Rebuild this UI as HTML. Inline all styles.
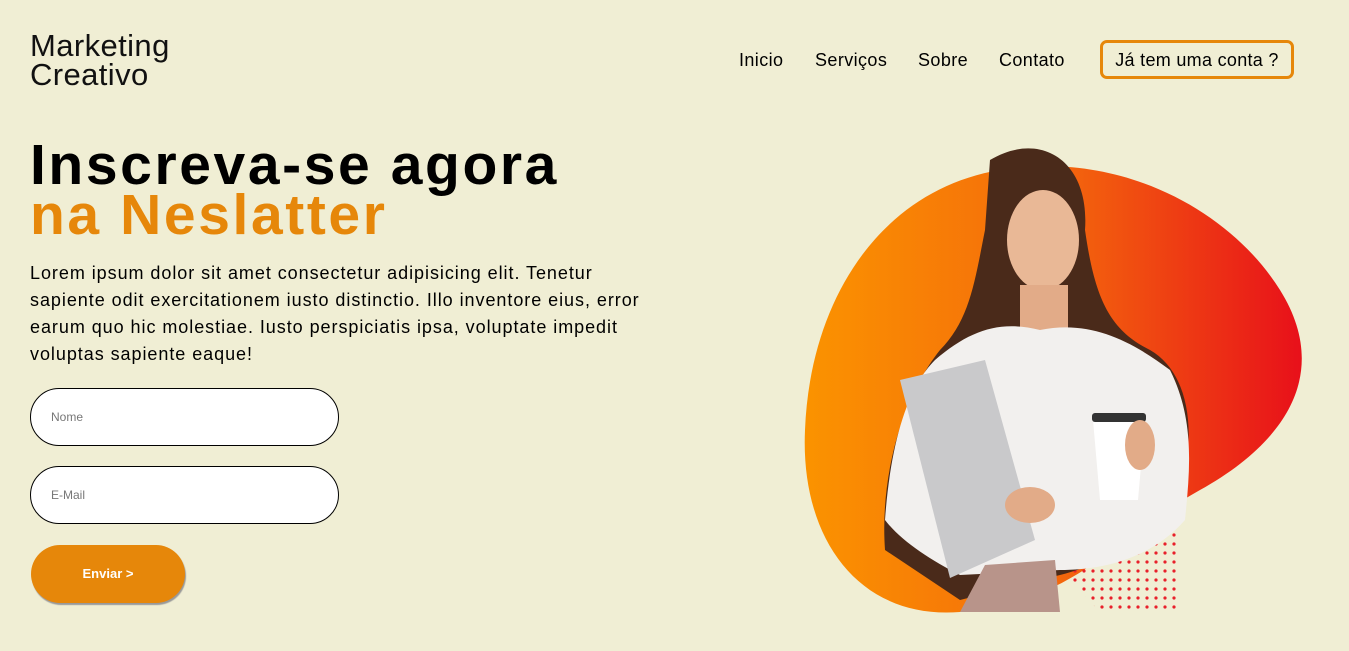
<!DOCTYPE html>
<html><head><meta charset="utf-8"><style>
*{margin:0;padding:0;box-sizing:border-box}
body{width:1349px;height:651px;background:#f0eed4;font-family:"Liberation Sans",sans-serif;position:relative;overflow:hidden;color:#000}
.logo{position:absolute;left:30px;top:31px;font-size:31px;line-height:29px;letter-spacing:0.4px;color:#111}
nav{position:absolute;top:50px;left:739px;font-size:18px;letter-spacing:0.4px}
nav span{position:absolute;white-space:nowrap}
.btn{position:absolute;left:1100px;top:40px;width:194px;height:39px;border:3px solid #e6870a;border-radius:7px;font-size:18px;text-align:center;line-height:34px;letter-spacing:0.3px}
h1{position:absolute;left:30px;top:140px;font-size:57px;line-height:50px;font-weight:bold;letter-spacing:2.6px;white-space:nowrap}
h1 .o{color:#e6870a}
p.t{position:absolute;left:30px;top:260px;font-size:18px;line-height:27px;white-space:nowrap;letter-spacing:0.95px}
.in{position:absolute;left:30px;width:309px;height:58px;border:1.5px solid #000;border-radius:29px;background:#fff;font-size:12px;color:#777;padding-left:20px;line-height:56px}
.send{position:absolute;left:31px;top:545px;width:154px;height:58px;border-radius:29px;background:#e6870a;color:#fff;font-weight:bold;font-size:13px;text-align:center;line-height:58px;box-shadow:1px 2px 1px #999}
</style></head><body>
<div class="logo">Marketing<br>Creativo</div>
<nav><span style="left:0">Inicio</span><span style="left:76px">Serviços</span><span style="left:179px">Sobre</span><span style="left:260px">Contato</span></nav>
<div class="btn">Já tem uma conta ?</div>
<h1>Inscreva-se agora<br><span class="o">na Neslatter</span></h1>
<p class="t">Lorem ipsum dolor sit amet consectetur adipisicing elit. Tenetur<br>sapiente odit exercitationem iusto distinctio. Illo inventore eius, error<br>earum quo hic molestiae. Iusto perspiciatis ipsa, voluptate impedit<br>voluptas sapiente eaque!</p>
<div class="in" style="top:388px">Nome</div>
<div class="in" style="top:466px">E-Mail</div>
<div class="send">Enviar &gt;</div>
<svg style="position:absolute;left:0;top:0" width="1349" height="651">
<defs>
<linearGradient id="g" x1="0" x2="1"><stop offset="0" stop-color="#fb9300"/><stop offset="0.5" stop-color="#f46a0c"/><stop offset="1" stop-color="#e8101a"/></linearGradient>
<pattern id="d" width="9" height="9" patternUnits="userSpaceOnUse"><circle cx="4" cy="4" r="1.6" fill="#e8202a"/></pattern>
</defs>
<path d="M1000 170 C1120 150 1230 210 1280 290 C1330 370 1290 440 1200 490 C1110 540 1080 600 960 612 C860 620 800 540 805 430 C810 300 880 190 1000 170Z" fill="url(#g)"/>
<path d="M1060 570 L1180 520 L1180 612 L1100 612Z" fill="url(#d)"/>
<path d="M990 160 C1040 130 1090 160 1085 230 C1095 300 1110 330 1150 350 C1185 370 1195 420 1185 470 C1175 520 1120 560 1060 575 L960 600 L885 550 C880 480 900 400 940 350 C970 320 975 280 985 230Z" fill="#4a2a1a"/>
<ellipse cx="1043" cy="240" rx="36" ry="50" fill="#e9b896"/>
<path d="M1020 285 L1068 285 L1068 340 L1020 340Z" fill="#e2ab88"/>
<path d="M935 360 C970 330 1000 320 1040 330 C1090 320 1130 340 1170 370 C1195 420 1190 470 1185 520 C1150 560 1100 570 1060 570 L960 575 C930 560 900 540 885 520 C890 450 905 390 935 360Z" fill="#f2f0ee"/>
<path d="M985 565 L1055 560 L1060 612 L960 612Z" fill="#b8948a"/>
<path d="M900 380 L985 360 L1035 540 L950 578 Z" fill="#c9c9cb"/>
<path d="M1093 420 L1145 420 L1138 500 L1100 500Z" fill="#fff"/>
<rect x="1092" y="413" width="54" height="9" rx="3" fill="#333"/>
<ellipse cx="1030" cy="505" rx="25" ry="18" fill="#e2ab88"/>
<ellipse cx="1140" cy="445" rx="15" ry="25" fill="#e2ab88"/>
</svg>
</body></html>
